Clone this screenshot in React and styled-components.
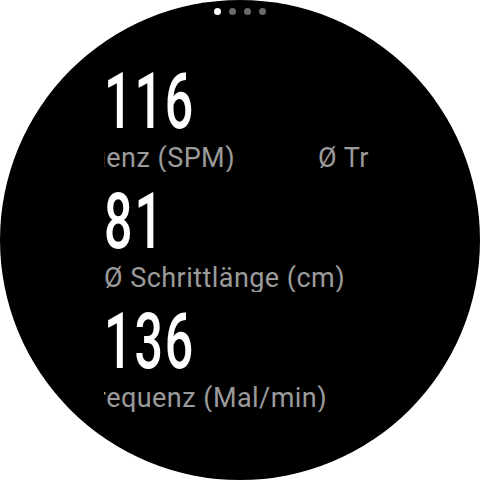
import React from "react";
import styled, { createGlobalStyle } from "styled-components";

const Global = createGlobalStyle`
  html, body {
    margin: 0;
    padding: 0;
    background: #fff;
  }
`;

const Watch = styled.div`
  width: 480px;
  height: 480px;
  border-radius: 50%;
  background: #000;
  overflow: hidden;
  display: flex;
  flex-direction: column;
  font-family: Roboto, "Noto Sans", sans-serif;
`;

const Pager = styled.div`
  display: flex;
  justify-content: center;
  gap: 8px;
  padding-top: 8px;
  height: 7px;
`;

const Dot = styled.span`
  width: 7px;
  height: 7px;
  border-radius: 50%;
  background: ${({ active }) => (active ? "#fff" : "#6a6a6a")};
`;

const List = styled.div`
  display: flex;
  flex-direction: column;
  gap: 12px;
  margin-top: 49px;
  padding-left: 104px;
`;

const Row = styled.div`
  display: flex;
  flex-direction: column;
  gap: 4px;
`;

const Value = styled.div`
  color: #fff;
  font-size: 77px;
  font-weight: 500;
  line-height: 1;
  height: 77px;
  letter-spacing: 3px;
  white-space: nowrap;
  transform: scaleX(0.65);
  transform-origin: left center;
`;

const LabelClip = styled.div`
  width: 266px;
  height: 27px;
  overflow: hidden;
`;

const Track = styled.div`
  display: flex;
  color: #9b9b9b;
  font-size: 27px;
  letter-spacing: 0.45px;
  line-height: 1;
  white-space: nowrap;
`;

// marquee: the running copy is pinned at its right end
const Lead = styled.div`
  flex-shrink: 0;
  display: flex;
  justify-content: flex-end;
  width: ${({ end }) => end}px;
`;

const Copy = styled.span`
  flex-shrink: 0;
  margin-left: ${({ gap }) => gap || 0}px;
`;

const stats = [
  { value: "116", label: "Ø Trittfrequenz (SPM)", end: 131, loop: true },
  { value: "81", label: "Ø Schrittlänge (cm)" },
  { value: "136", label: "Ø Herzfrequenz (Mal/min)", end: 223 },
];

const Label = ({ text, end, loop }) => {
  if (!end) {
    return (
      <LabelClip>
        <Track>
          <Copy>{text}</Copy>
        </Track>
      </LabelClip>
    );
  }
  return (
    <LabelClip>
      <Track>
        <Lead end={end}>
          <Copy>{text}</Copy>
        </Lead>
        {loop && <Copy gap={83}>{text}</Copy>}
      </Track>
    </LabelClip>
  );
};

export default function App() {
  return (
    <>
      <Global />
      <Watch>
        <Pager>
          <Dot active />
          <Dot />
          <Dot />
          <Dot />
        </Pager>
        <List>
          {stats.map((s) => (
            <Row key={s.value}>
              <Value>{s.value}</Value>
              <Label text={s.label} end={s.end} loop={s.loop} />
            </Row>
          ))}
        </List>
      </Watch>
    </>
  );
}
